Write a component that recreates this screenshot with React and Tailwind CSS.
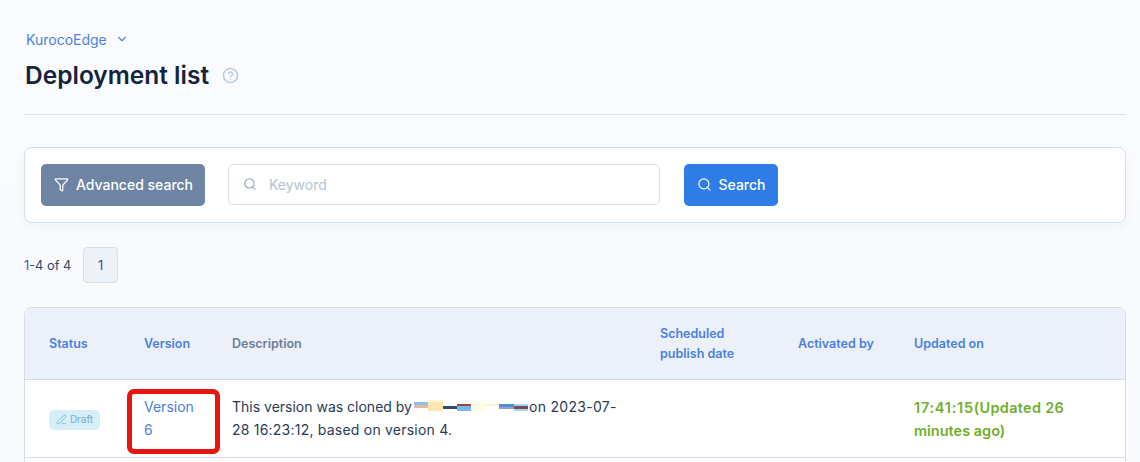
import React from "react";
import { ChevronDown, CircleHelp, Filter, Search, PenLine } from "lucide-react";

function Redact() {
  return (
    <svg width="115" height="13" viewBox="0 0 115 13" className="inline-block align-[-1px] shrink-0 ml-[2px]" aria-hidden="true">
      <rect x="0" y="2" width="14" height="3" fill="#8ebfe8" />
      <rect x="0" y="5" width="14" height="3" fill="#e3b9a0" />
      <rect x="14" y="0" width="15" height="2" fill="#fff3d6" />
      <rect x="14" y="2" width="15" height="9" fill="#ffe5b0" />
      <rect x="29" y="6" width="14" height="3" fill="#324a6d" />
      <rect x="43" y="4" width="14" height="2" fill="#a8404a" />
      <rect x="43" y="6" width="14" height="5" fill="#74b9ec" />
      <rect x="57" y="1" width="14" height="10" fill="#fffde8" />
      <rect x="71" y="4" width="14" height="2" fill="#fff0c8" />
      <rect x="85" y="4" width="15" height="3" fill="#4f8fd6" />
      <rect x="85" y="7" width="15" height="2" fill="#9a9cc8" />
      <rect x="100" y="4" width="14" height="2" fill="#9fd8f5" />
      <rect x="100" y="6" width="14" height="3" fill="#7a4a52" />
      <rect x="100" y="9" width="14" height="2" fill="#9fd8f5" />
    </svg>
  );
}

export default function App() {
  return (
    <div className="w-[1140px] h-[462px] overflow-hidden bg-gradient-to-b from-[#fbfcff] to-[#f7f9fc] font-['Inter',sans-serif] text-[#1a2b45]">
      <div className="pl-[24px] pr-[14px] pt-[29px]">
        <div className="flex items-center gap-[8px] pl-[2px] h-[20px] text-[14px] text-[#4a80e8]">
          <span>KurocoEdge</span>
          <ChevronDown size={14} strokeWidth={1.9} />
        </div>
        <div className="flex items-center gap-[13px] mt-[8px] h-[36px] pl-[1px]">
          <h1 className="text-[24.5px] font-semibold text-[#14243c]">Deployment list</h1>
          <CircleHelp size={17} strokeWidth={2.2} className="text-[#bccbe0]" />
        </div>
        <div className="border-b border-[#d3e0ee] mt-[21px]" />

        <div className="mt-[32px] h-[76px] bg-white border border-[#d6e0ec] rounded-[8px] flex items-center px-[16px] shadow-[0_4px_12px_rgba(30,60,110,0.04)]">
          <button className="w-[164px] h-[42px] pb-[2px] pl-[1px] rounded-[5px] bg-[#6f84a3] text-white flex items-center justify-center gap-[7px] text-[14px] font-medium">
            <Filter size={15} strokeWidth={2} />
            Advanced search
          </button>
          <div className="ml-[23px] mb-[1px] w-[432px] h-[41px] pb-[1px] rounded-[5px] border border-[#d6e0ec] bg-white flex items-center pl-[14px] gap-[12px] text-[14px] text-[#b5c2d6]">
            <Search size={14} strokeWidth={1.8} className="text-[#8b9cb6]" />
            <span>Keyword</span>
          </div>
          <button className="ml-[24px] w-[94px] h-[42px] pb-[2px] pl-[1px] rounded-[5px] bg-[#2e7ce6] text-white flex items-center justify-center gap-[6px] text-[14px] font-medium">
            <Search size={15} strokeWidth={2} />
            Search
          </button>
        </div>

        <div className="mt-[24px] flex items-center h-[36px]">
          <span className="text-[12.8px] text-[#34476a] pt-[2px]"><span className="text-[#2a5fb8]">1</span>-4 of 4</span>
          <span className="ml-[12px] w-[35px] h-[36px] pt-[2px] rounded-[4px] border border-[#d6e0ec] bg-[#edf1f8] flex items-center justify-center text-[13px] text-[#4a5568]">1</span>
        </div>

        <div className="mt-[24px] border border-[#d3dde9] rounded-t-[8px] bg-white h-[200px]">
          <div className="h-[72px] bg-[#ecf1f9] rounded-t-[8px] border-b border-[#d3dde9] flex items-center text-[12.5px] font-semibold text-[#4a80e0]">
            <div className="w-[95px] pl-[24px] pt-[2px]">Status</div>
            <div className="w-[112px] pl-[24px] pt-[2px]">Version</div>
            <div className="w-[428px] pt-[2px] text-[#6b7f9c]">Description</div>
            <div className="w-[138px] leading-[20px]">Scheduled<br />publish date</div>
            <div className="w-[116px] pt-[2px]">Activated by</div>
            <div className="pt-[2px]">Updated on</div>
          </div>
          <div className="h-[78px] border-b border-[#d3dde9] flex items-center text-[14px]">
            <div className="w-[103px] pl-[24px] pt-[2px]">
              <span className="inline-flex items-center gap-[3px] w-[51px] h-[20px] justify-center rounded-[5px] bg-[#d5eef7] text-[10px] text-[#6fb0ce]">
                <PenLine size={11} strokeWidth={1.6} />
                Draft
              </span>
            </div>
            <div className="relative w-[104px] pl-[16px] pb-[2px] leading-[23px] text-[#4a80e0]">
              Version<br />6
              <span className="absolute -left-[1px] -top-[6px] w-[93px] h-[65px] rounded-[7px] border-[5px] border-[#e8150f]" />
            </div>
            <div className="w-[427px] pb-[2px] leading-[23px] text-[#2a3a55]">
              This version was cloned by<Redact /><span className="tracking-[0.3px]">on 2023-07-</span><br /><span className="tracking-[0.22px]">28 16:23:12, based on version 4.</span>
            </div>
            <div className="w-[255px]" />
            <div className="leading-[23px] text-[14.5px] font-semibold text-[#6fae2e]"><span className="tracking-[0.75px]">17:41:15</span><span className="tracking-[0.3px]">(Updated 26</span><br />minutes ago)</div>
          </div>
        </div>
      </div>
    </div>
  );
}
